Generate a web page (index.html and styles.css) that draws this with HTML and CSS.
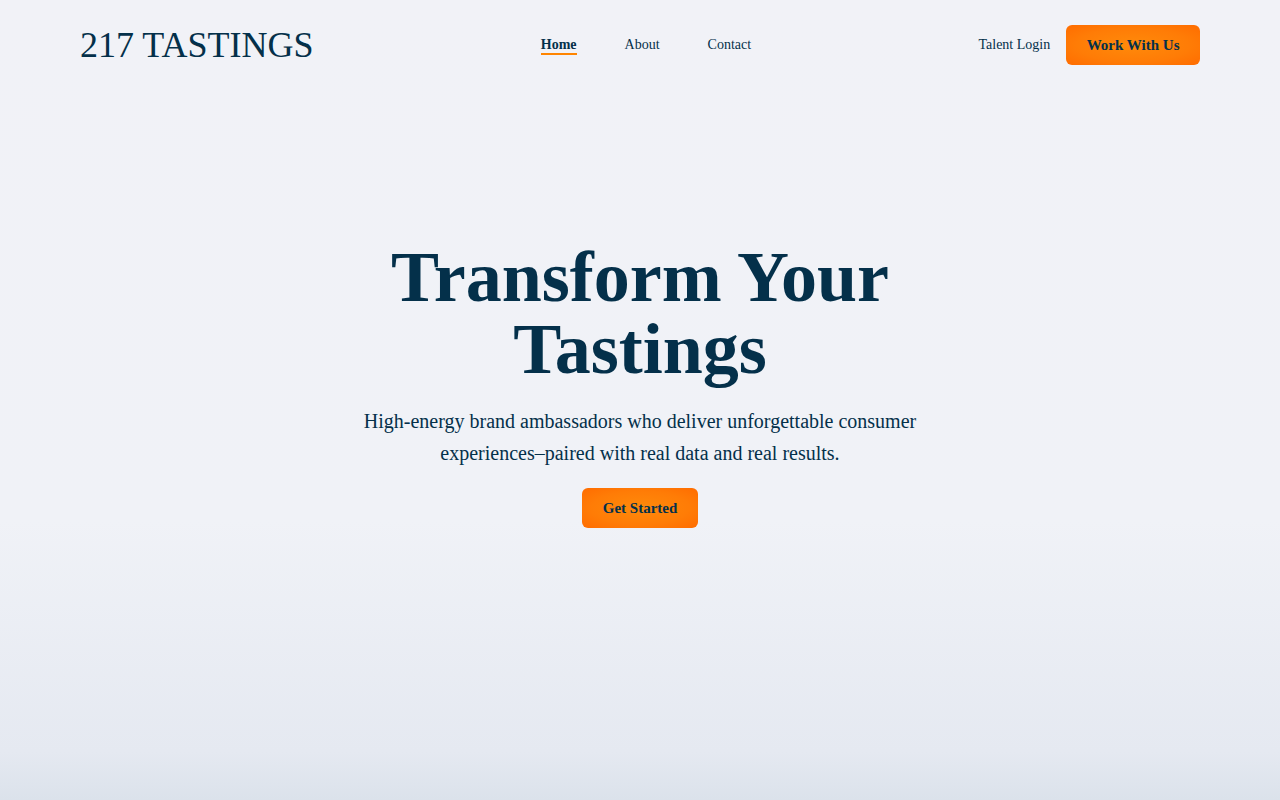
FILE: index.html
```html
<!DOCTYPE html>
<html lang="en">
<head>
    <meta charset="UTF-8">
    <meta name="viewport" content="width=device-width, initial-scale=1.0">
    <title>217 Tastings</title>
    <link rel="stylesheet" href="styles.css">
</head>
<body>
    <header class="site-header">
        <a class="logo" href="#">217 TASTINGS</a>
        <nav class="main-nav">
            <a href="#" class="active">Home</a>
            <a href="#">About</a>
            <a href="#">Contact</a>
        </nav>
        <div class="header-actions">
            <a href="#" class="login-link">Talent Login</a>
            <a href="#" class="btn">Work With Us</a>
        </div>
    </header>

    <main class="hero">
        <h1>Transform Your<br>Tastings</h1>
        <p>High-energy brand ambassadors who deliver unforgettable consumer experiences–paired with real data and real results.</p>
        <a href="#" class="btn">Get Started</a>
    </main>
</body>
</html>
```

FILE: styles.css
```css
* {
  box-sizing: border-box;
}

html, body {
  height: 100%;
}

body {
  margin: 0;
  font-family: 'Liberation Serif', 'Times New Roman', serif;
  color: #04304a;
  background: linear-gradient(180deg, #f1f2f7 0%, #f0f2f7 65%, #e5e9f1 94%, #dbe2eb 100%);
  overflow: hidden;
}

a {
  color: inherit;
  text-decoration: none;
}

.site-header {
  display: flex;
  justify-content: space-between;
  align-items: center;
  height: 90px;
  padding: 0 80px;
}

.logo {
  font-size: 36px;
  line-height: 1;
}

.main-nav {
  display: flex;
  gap: 48px;
  padding-top: 2px;
  font-size: 14px;
}

.main-nav a {
  padding-bottom: 0;
  border-bottom: 2px solid transparent;
}

.main-nav a.active {
  font-weight: bold;
  border-bottom-color: #ff8500;
}

.header-actions {
  display: flex;
  align-items: center;
  gap: 16px;
  font-size: 14px;
}

.btn {
  display: inline-block;
  padding: 11px 20.5px;
  font-size: 15px;
  font-weight: bold;
  line-height: 18px;
  color: #04304a;
  border-radius: 6px;
  background: radial-gradient(ellipse at center, #ff8a0a 0%, #ff7c06 60%, #ff6c00 100%);
}

.hero {
  display: flex;
  flex-direction: column;
  align-items: center;
  text-align: center;
  padding-top: 151px;
}

.hero h1 {
  margin: 0;
  font-size: 72px;
  line-height: 72px;
  font-weight: bold;
}

.hero p {
  max-width: 600px;
  margin: 20px 0 19px;
  font-size: 20px;
  line-height: 32px;
}
```
